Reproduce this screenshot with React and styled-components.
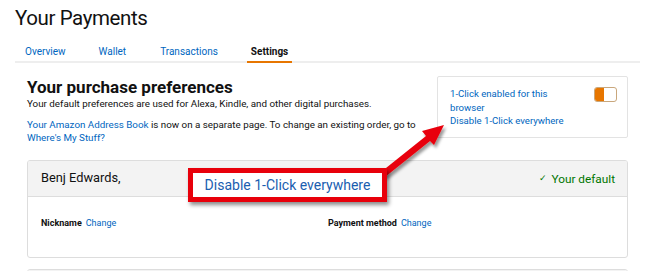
import React from "react";
import styled, { createGlobalStyle } from "styled-components";

const Global = createGlobalStyle`
  html, body { margin: 0; padding: 0; background: #fff; }
  body { font-family: Roboto, "Liberation Sans", sans-serif; color: #111; }
  a { color: #0066c0; text-decoration: none; }
`;

const Page = styled.div`
  position: relative;
  width: 650px;
  height: 271px;
  overflow: hidden;
  padding: 0 10px 0 15px;
  box-sizing: border-box;
`;

const Title = styled.h1`
  margin: 0;
  padding-top: 5px;
  font-size: 20.5px;
  letter-spacing: -0.4px;
  line-height: 26px;
  font-weight: 400;
`;

const Tabs = styled.nav`
  display: flex;
  margin-top: 13px;
  padding-left: 10px;
  border-bottom: 2px solid #eee;
`;

const Tab = styled.a`
  font-size: 10px;
  line-height: 16px;
  margin-right: ${(p) => p.gap}px;
  color: ${(p) => (p.active ? "#111" : "#0066c0")};
  font-weight: ${(p) => (p.active ? 700 : 400)};
  border-bottom: ${(p) => (p.active ? "2px solid #e77600" : "2px solid transparent")};
  margin-bottom: -2px;
  padding: 0 ${(p) => (p.active ? 4 : 0)}px 1px;
  margin-left: ${(p) => (p.active ? -4 : 0)}px;
`;

const Content = styled.div`
  padding: 0 12px;
`;

const Top = styled.div`
  display: flex;
  justify-content: space-between;
  margin-top: 13px;
`;

const Intro = styled.div`
  padding-top: 2px;
`;

const Heading = styled.h2`
  margin: 0;
  font-size: 17px;
  line-height: 19px;
  font-weight: 700;
`;

const Text = styled.p`
  margin: ${(p) => p.mt || 0}px 0 0;
  font-size: 9.8px;
  line-height: 13px;
`;

const OneClick = styled.div`
  width: 191px;
  height: 62px;
  box-sizing: border-box;
  border: 1px solid #e3e3e3;
  border-radius: 2px;
  padding: 10px 10px 0 12px;
  display: flex;
  justify-content: space-between;
`;

const OneClickText = styled.div`
  width: 125px;
  font-size: 9.6px;
  line-height: 13.5px;
  color: #0066c0;
`;

const Toggle = styled.div`
  width: 23px;
  height: 15px;
  box-sizing: border-box;
  border: 1px solid #c9a77c;
  border-radius: 3px;
  display: flex;
  overflow: hidden;
  background: #fff;
`;

const ToggleOn = styled.div`
  width: 9px;
  background: #e77600;
`;

const Card = styled.div`
  margin-top: ${(p) => p.mt}px;
  border: 1px solid #ddd;
  border-radius: 3px;
  overflow: hidden;
`;

const CardHead = styled.div`
  height: 35px;
  background: #f3f3f3;
  border-bottom: 1px solid #ddd;
  display: flex;
  align-items: center;
  justify-content: space-between;
  padding: 0 12px 0 13px;
`;

const Name = styled.span`
  font-size: 12.8px;
  margin-top: -3px;
`;

const Default = styled.span`
  font-size: 11.8px;
  color: #007600;
`;

const Check = styled.span`
  font-size: 9px;
  position: relative;
  top: -2px;
  margin-right: 4px;
`;

const CardBody = styled.div`
  height: 60px;
  display: flex;
  padding: 21px 13px 0;
  box-sizing: border-box;
`;

const Field = styled.div`
  width: ${(p) => p.w}px;
  font-size: 9px;
`;

const Label = styled.b`
  font-weight: 700;
  margin-right: 4px;
`;

const Callout = styled.div`
  position: absolute;
  left: 188px;
  top: 168px;
  width: 199px;
  height: 34px;
  box-sizing: border-box;
  border: 5px solid #e8000b;
  background: #fff;
  display: flex;
  align-items: center;
  justify-content: center;
  font-size: 14px;
  color: #1a5eb0;
  box-shadow: 2px 3px 4px rgba(0, 0, 0, 0.45);
`;

const Arrow = styled.svg`
  position: absolute;
  left: 0;
  top: 0;
  pointer-events: none;
`;

export default function App() {
  return (
    <>
      <Global />
      <Page>
        <Title>Your Payments</Title>
        <Tabs>
          <Tab gap={33}>Overview</Tab>
          <Tab gap={34}>Wallet</Tab>
          <Tab gap={33}>Transactions</Tab>
          <Tab active>Settings</Tab>
        </Tabs>
        <Content>
          <Top>
            <Intro>
              <Heading>Your purchase preferences</Heading>
              <Text>Your default preferences are used for Alexa, Kindle, and other digital purchases.</Text>
              <Text mt={8}>
                <a>Your Amazon Address Book</a> is now on a separate page. To change an existing order, go to
                <br />
                <a>Where's My Stuff?</a>
              </Text>
            </Intro>
            <OneClick>
              <OneClickText>
                1-Click enabled for this browser
                <br />
                Disable 1-Click everywhere
              </OneClickText>
              <Toggle>
                <ToggleOn />
              </Toggle>
            </OneClick>
          </Top>
          <Card mt={16}>
            <CardHead>
              <Name>Benj Edwards,</Name>
              <Default>
                <Check>✓</Check>Your default
              </Default>
            </CardHead>
            <CardBody>
              <Field w={287}>
                <Label>Nickname</Label>
                <a>Change</a>
              </Field>
              <Field>
                <Label>Payment method</Label>
                <a>Change</a>
              </Field>
            </CardBody>
          </Card>
          <Card mt={11}>
            <CardHead />
          </Card>
        </Content>
        <Arrow width="650" height="271">
          <defs>
            <filter id="sh" x="-20%" y="-20%" width="140%" height="140%">
              <feDropShadow dx="2" dy="3" stdDeviation="1.5" floodColor="#000" floodOpacity="0.4" />
            </filter>
          </defs>
          <g filter="url(#sh)" fill="#e8000b" stroke="none">
            <path d="M381 172 L426 136 L422 131 L444 125 L434 145 L430 141 L385 177 Z" />
          </g>
        </Arrow>
        <Callout>Disable 1-Click everywhere</Callout>
      </Page>
    </>
  );
}
